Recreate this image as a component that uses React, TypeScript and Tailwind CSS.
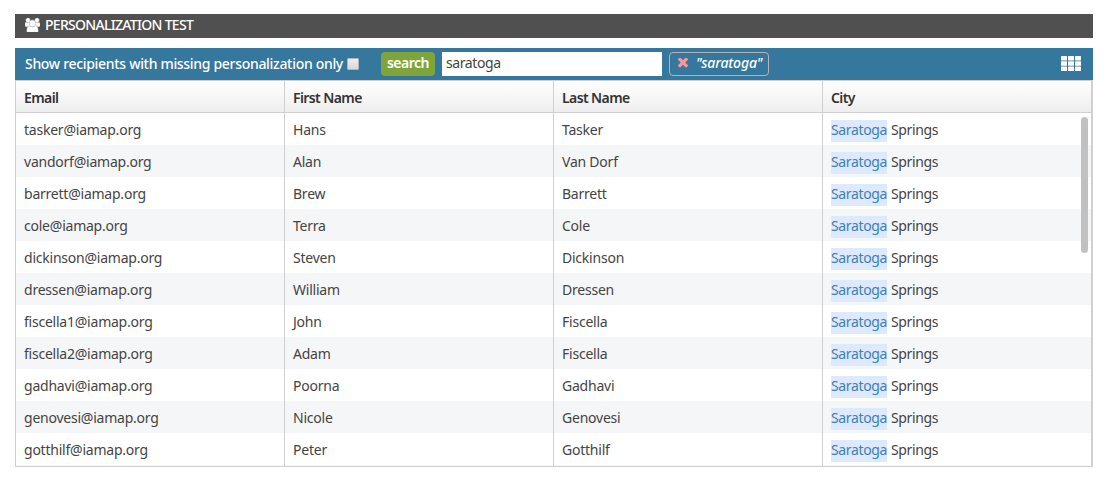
import React from "react";

interface Recipient {
  email: string;
  firstName: string;
  lastName: string;
}

const recipients: Recipient[] = [
  { email: "tasker@iamap.org", firstName: "Hans", lastName: "Tasker" },
  { email: "vandorf@iamap.org", firstName: "Alan", lastName: "Van Dorf" },
  { email: "barrett@iamap.org", firstName: "Brew", lastName: "Barrett" },
  { email: "cole@iamap.org", firstName: "Terra", lastName: "Cole" },
  { email: "dickinson@iamap.org", firstName: "Steven", lastName: "Dickinson" },
  { email: "dressen@iamap.org", firstName: "William", lastName: "Dressen" },
  { email: "fiscella1@iamap.org", firstName: "John", lastName: "Fiscella" },
  { email: "fiscella2@iamap.org", firstName: "Adam", lastName: "Fiscella" },
  { email: "gadhavi@iamap.org", firstName: "Poorna", lastName: "Gadhavi" },
  { email: "genovesi@iamap.org", firstName: "Nicole", lastName: "Genovesi" },
  { email: "gotthilf@iamap.org", firstName: "Peter", lastName: "Gotthilf" },
];

const columns = ["Email", "First Name", "Last Name", "City"];

const UsersIcon: React.FC = () => (
  <svg
    viewBox="0 0 1920 1664"
    preserveAspectRatio="none"
    className="mt-1 h-[14px] w-[15px] self-start"
    fill="currentColor"
    stroke="currentColor"
    strokeWidth="70"
  >
    <path d="M593 896q-162 5-265 128h-134q-82 0-138-40.5t-56-118.5q0-353 124-353 6 0 43.5 21t97.5 42.5 119 21.5q67 0 133-23-5 37-5 66 0 139 81 256zm1071 637q0 120-73 189.5t-194 69.5h-874q-121 0-194-69.5t-73-189.5q0-53 3.5-103.5t14-109 26.5-108.5 43-97.5 62-81 85.5-53.5 111.5-20q10 0 43 21.5t73 48 107 48 135 21.5 135-21.5 107-48 73-48 43-21.5q61 0 111.5 20t85.5 53.5 62 81 43 97.5 26.5 108.5 14 109 3.5 103.5zm-1024-1277q0 106-75 181t-181 75-181-75-75-181 75-181 181-75 181 75 75 181zm704 384q0 159-112.5 271.5t-271.5 112.5-271.5-112.5-112.5-271.5 112.5-271.5 271.5-112.5 271.5 112.5 112.5 271.5zm576 225q0 78-56 118.5t-138 40.5h-134q-103-123-265-128 81-117 81-256 0-29-5-66 66 23 133 23 59 0 119-21.5t97.5-42.5 43.5-21q124 0 124 353zm-128-609q0 106-75 181t-181 75-181-75-75-181 75-181 181-75 181 75 75 181z" />
  </svg>
);

const TimesIcon: React.FC = () => (
  <svg viewBox="302 430 1188 1188" className="mb-[2px] size-[10px] text-[#ff9494]" fill="currentColor">
    <path d="M1490 1322q0 40-28 68l-136 136q-28 28-68 28t-68-28l-294-294-294 294q-28 28-68 28t-68-28l-136-136q-28-28-28-68t28-68l294-294-294-294q-28-28-28-68t28-68l136-136q28-28 68-28t68 28l294 294 294-294q28-28 68-28t68 28l136 136q28 28 28 68t-28 68l-294 294 294 294q28 28 28 68z" />
  </svg>
);

const GridIcon: React.FC = () => (
  <svg viewBox="0 0 20 15" className="mb-px h-[15px] w-5" fill="currentColor">
    {[0, 7, 14].map((x) =>
      [0, 5.25, 10.5].map((y) => (
        <rect key={`${x}-${y}`} x={x} y={y} width="6" height="4.5" rx="0.6" />
      ))
    )}
  </svg>
);

const TitleBar: React.FC = () => (
  <div className="flex h-6 items-center gap-[5px] bg-[#505050] pl-[10px] text-white">
    <UsersIcon />
    <h1 className="pb-[2px] text-[14px] leading-[22px] font-medium tracking-[-0.7px]">PERSONALIZATION TEST</h1>
  </div>
);

const Toolbar: React.FC = () => (
  <div className="mt-[10px] flex h-8 items-center bg-[#36779d] pr-3 pl-[10px] text-white">
    <label className="flex w-[356px] items-center">
      <span className="w-[322px] shrink-0 pb-[2px] text-[14px] font-medium tracking-[-0.31px] whitespace-nowrap">
        Show recipients with missing personalization only
      </span>
      <input
        type="checkbox"
        className="size-3 shrink-0 appearance-none rounded-[1px] border border-[#b5b5b5] bg-linear-to-b from-[#eeeeee] to-[#d9d9d9]"
      />
    </label>
    <button className="h-6 w-[54px] rounded bg-[#7fa53a] pb-[2px] text-[14px] leading-none font-semibold tracking-[-0.5px]">
      search
    </button>
    <input
      type="text"
      defaultValue="saratoga"
      className="ml-[7px] h-6 w-[220px] bg-white px-1 pb-[3px] text-[14px] tracking-[-0.4px] text-[#444444] outline-none"
    />
    <div className="ml-[7px] flex h-6 w-[100px] items-center rounded border border-[#b5b5b5] pl-2">
      <TimesIcon />
      <span className="ml-2 pb-[4px] text-[14px] font-medium tracking-[-0.15px] whitespace-nowrap italic">"saratoga"</span>
    </div>
    <div className="ml-auto">
      <GridIcon />
    </div>
  </div>
);

const App: React.FC = () => {
  return (
    <main className="h-[482px] w-[1107px] bg-white pt-[14px] pr-[14px] pl-[15px] font-['Noto_Sans',sans-serif]">
      <TitleBar />
      <Toolbar />
      <div className="h-[387px] border-t border-b border-l border-[#d0d0d0]">
        <div className="relative h-full border-r-2 border-[#d0d0d0] bg-[#f5f6f8]">
          <div className="grid h-8 grid-cols-[269px_269px_269px_1fr] border-b border-[#d0d0d0] bg-linear-to-b from-white to-[#eeeeee]">
            {columns.map((column) => (
              <div
                key={column}
                className="border-r border-[#d0d0d0] pt-[3px] pl-2 text-[14px] leading-[28px] font-semibold tracking-[-0.6px] text-[#333333] last:border-r-0"
              >
                {column}
              </div>
            ))}
          </div>
          {recipients.map((recipient) => (
            <div
              key={recipient.email}
              className="grid h-8 grid-cols-[269px_269px_269px_1fr] text-[14px] leading-[34px] tracking-[-0.23px] text-[#444444] odd:bg-[#f5f6f8] even:bg-white"
            >
              <div className="border-r border-[#d0d0d0] pl-2">{recipient.email}</div>
              <div className="border-r border-[#d0d0d0] pl-2">{recipient.firstName}</div>
              <div className="border-r border-[#d0d0d0] pl-2">{recipient.lastName}</div>
              <div className="flex pt-[7px] pl-2 leading-[19px] tracking-[-0.35px]">
                <mark className="h-[22px] w-14 bg-[#dde9fd] text-[#3d80ba]">Saratoga</mark>
                <span className="ml-1">Springs</span>
              </div>
            </div>
          ))}
          <div className="absolute top-9 right-[3px] h-[136px] w-[7px] rounded-full bg-[#c1c1c1]" />
        </div>
      </div>
    </main>
  );
};

export default App;
